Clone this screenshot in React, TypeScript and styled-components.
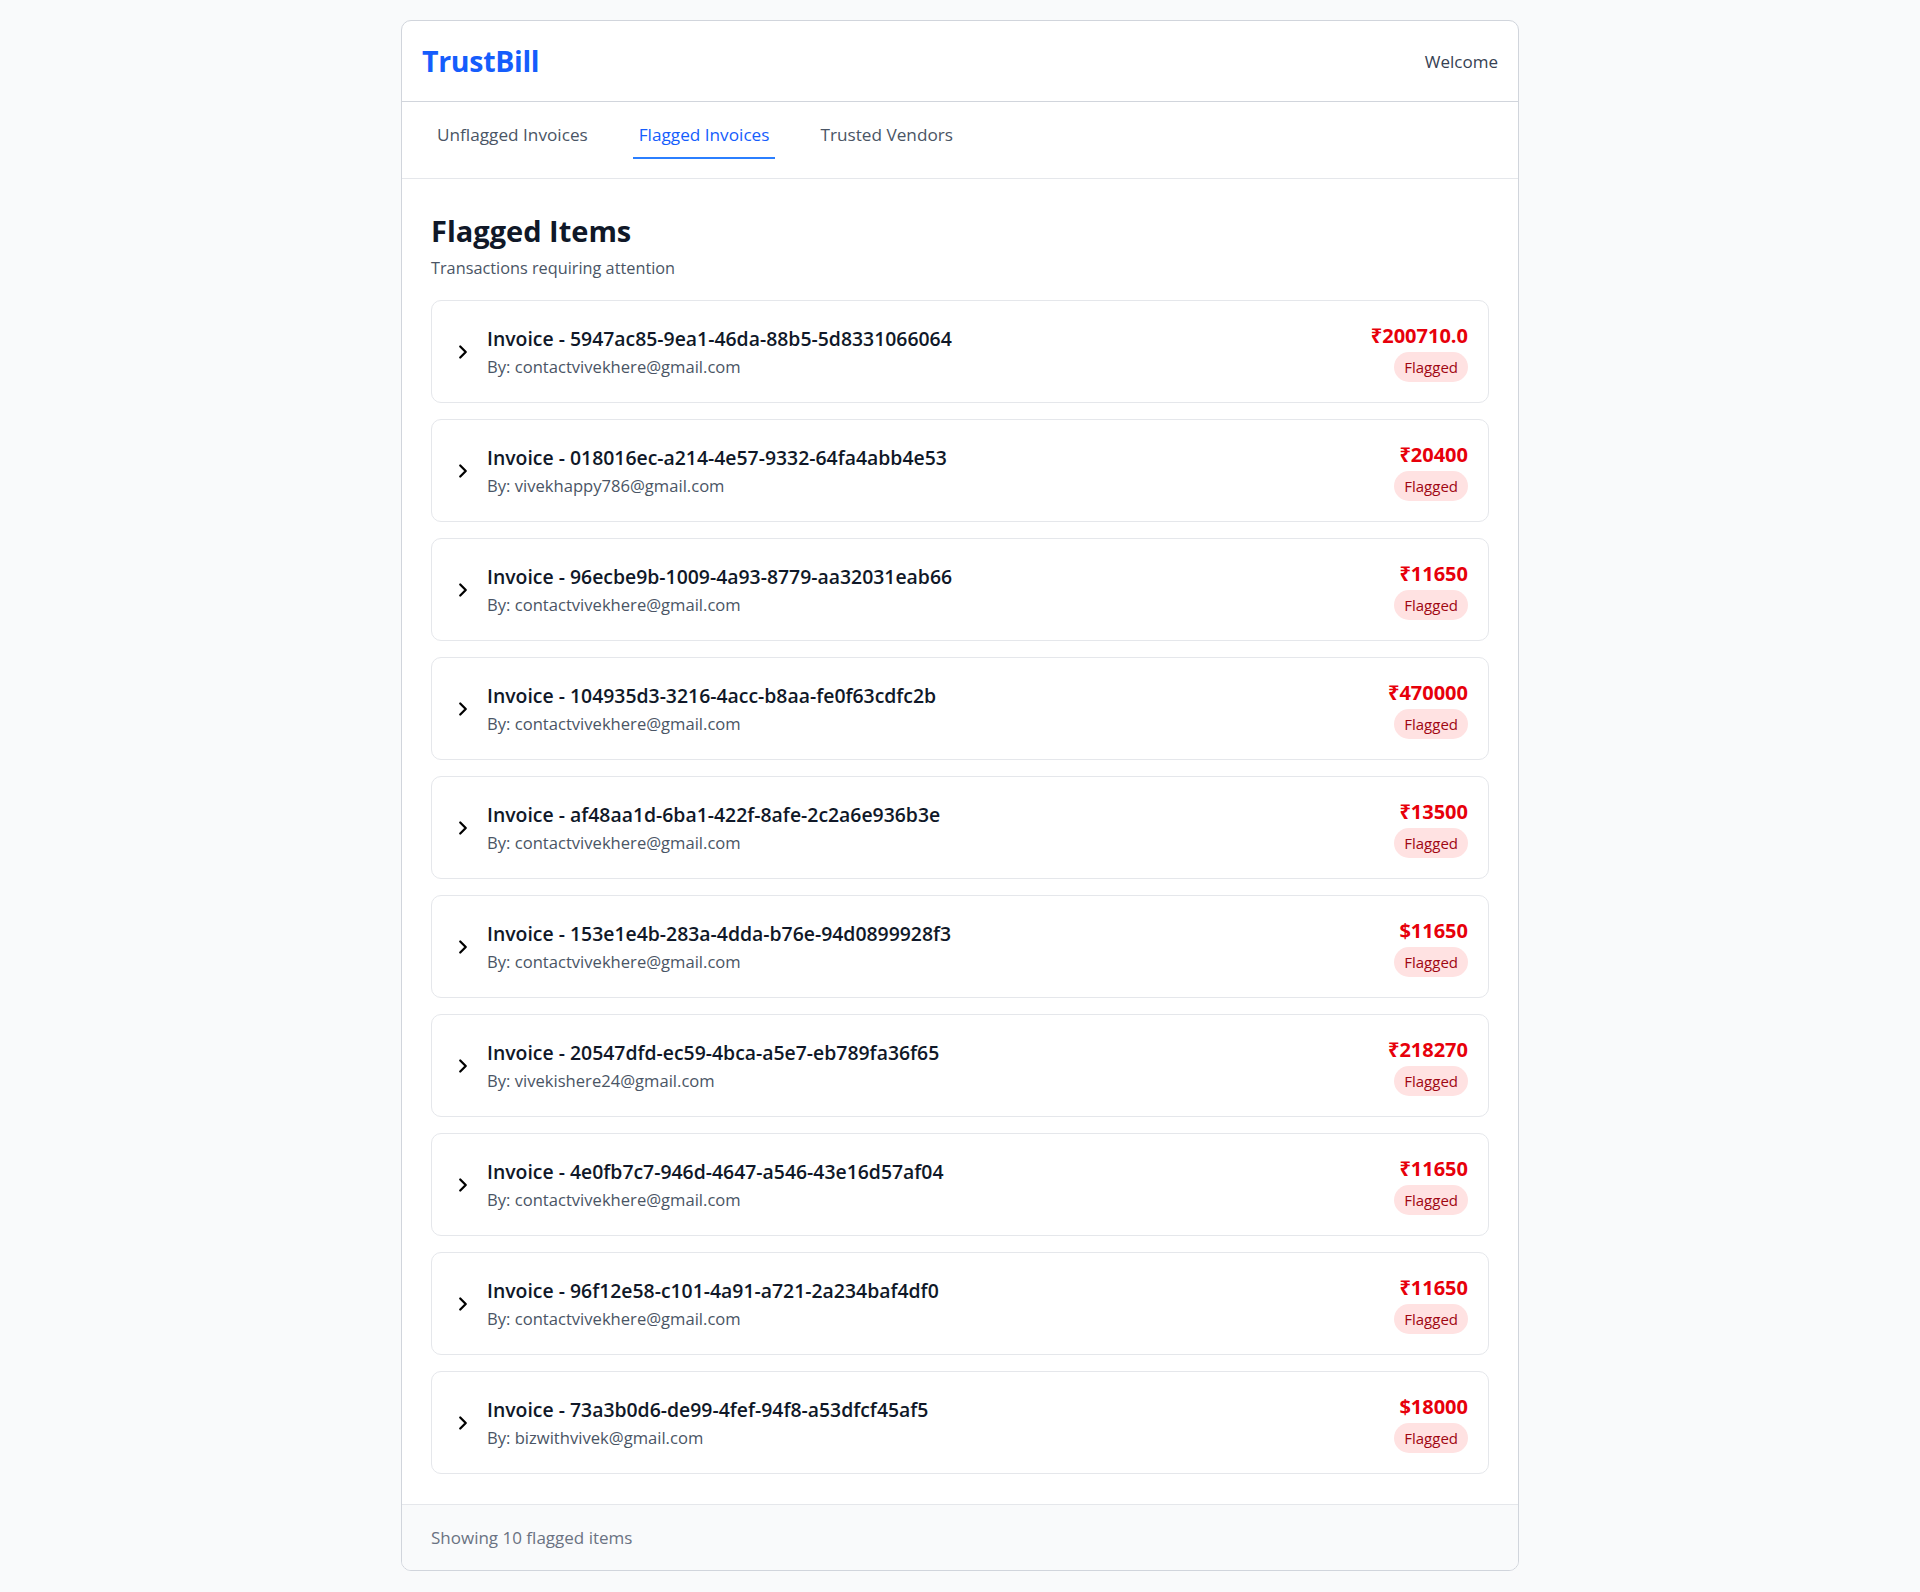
import styled, { createGlobalStyle } from "styled-components";

type Invoice = {
  id: string;
  by: string;
  amount: string;
};

const invoices: Invoice[] = [
  { id: "5947ac85-9ea1-46da-88b5-5d8331066064", by: "contactvivekhere@gmail.com", amount: "₹200710.0" },
  { id: "018016ec-a214-4e57-9332-64fa4abb4e53", by: "vivekhappy786@gmail.com", amount: "₹20400" },
  { id: "96ecbe9b-1009-4a93-8779-aa32031eab66", by: "contactvivekhere@gmail.com", amount: "₹11650" },
  { id: "104935d3-3216-4acc-b8aa-fe0f63cdfc2b", by: "contactvivekhere@gmail.com", amount: "₹470000" },
  { id: "af48aa1d-6ba1-422f-8afe-2c2a6e936b3e", by: "contactvivekhere@gmail.com", amount: "₹13500" },
  { id: "153e1e4b-283a-4dda-b76e-94d0899928f3", by: "contactvivekhere@gmail.com", amount: "$11650" },
  { id: "20547dfd-ec59-4bca-a5e7-eb789fa36f65", by: "vivekishere24@gmail.com", amount: "₹218270" },
  { id: "4e0fb7c7-946d-4647-a546-43e16d57af04", by: "contactvivekhere@gmail.com", amount: "₹11650" },
  { id: "96f12e58-c101-4a91-a721-2a234baf4df0", by: "contactvivekhere@gmail.com", amount: "₹11650" },
  { id: "73a3b0d6-de99-4fef-94f8-a53dfcf45af5", by: "bizwithvivek@gmail.com", amount: "$18000" },
];

const tabs = ["Unflagged Invoices", "Flagged Invoices", "Trusted Vendors"];

export default function App() {
  return (
    <>
      <GlobalStyle />
      <Page>
        <Panel>
          <Header>
            <Logo>TrustBill</Logo>
            <Welcome>Welcome</Welcome>
          </Header>
          <TabBar>
            {tabs.map((tab) => (
              <Tab key={tab} $active={tab === "Flagged Invoices"}>
                {tab}
              </Tab>
            ))}
          </TabBar>
          <Content>
            <Heading>Flagged Items</Heading>
            <Subtitle>Transactions requiring attention</Subtitle>
            <List>
              {invoices.map((invoice) => (
                <Row key={invoice.id}>
                  <RowMain>
                    <Chevron viewBox="0 0 24 24">
                      <path d="m9 18 6-6-6-6" />
                    </Chevron>
                    <RowText>
                      <Title>Invoice - {invoice.id}</Title>
                      <By>By: {invoice.by}</By>
                    </RowText>
                  </RowMain>
                  <RowSide>
                    <Amount>{invoice.amount}</Amount>
                    <Badge>Flagged</Badge>
                  </RowSide>
                </Row>
              ))}
            </List>
          </Content>
          <Footer>Showing 10 flagged items</Footer>
        </Panel>
      </Page>
    </>
  );
}

const GlobalStyle = createGlobalStyle`
  * {
    box-sizing: border-box;
  }
  body {
    margin: 0;
    background: #f9fafb;
    font-family: "Open Sans", "Noto Sans", sans-serif;
    color: #101828;
  }
`;

const Page = styled.div`
  padding: 20px 0 22px;
`;

const Panel = styled.div`
  width: 1118px;
  margin: 0 auto;
  background: #ffffff;
  border: 1px solid #d1d5dc;
  border-radius: 10px;
  overflow: hidden;
`;

const Header = styled.header`
  display: flex;
  align-items: center;
  justify-content: space-between;
  height: 81px;
  padding: 0 20px;
  border-bottom: 1px solid #d1d5dc;
`;

const Logo = styled.div`
  font-size: 28.5px;
  font-weight: 700;
  color: #155dfc;
  letter-spacing: -0.3px;
`;

const Welcome = styled.div`
  font-size: 17px;
  color: #364153;
`;

const TabBar = styled.nav`
  display: flex;
  gap: 39px;
  padding: 10px 29px 19px;
  border-bottom: 1px solid #e5e7eb;
`;

const Tab = styled.div<{ $active?: boolean }>`
  padding: 10px 6px;
  font-size: 17.2px;
  line-height: 25px;
  color: ${(p) => (p.$active ? "#155dfc" : "#4a5565")};
  border-bottom: 2px solid ${(p) => (p.$active ? "#2b7fff" : "transparent")};
`;

const Content = styled.main`
  padding: 32px 29px 30px;
`;

const Heading = styled.h1`
  margin: 0;
  font-size: 29px;
  line-height: 40px;
  font-weight: 700;
  color: #101828;
`;

const Subtitle = styled.p`
  margin: 5px 0 19px;
  font-size: 16.3px;
  line-height: 25px;
  color: #4a5565;
`;

const List = styled.div`
  display: flex;
  flex-direction: column;
  gap: 16px;
`;

const Row = styled.div`
  display: flex;
  align-items: center;
  justify-content: space-between;
  padding: 20px;
  border: 1px solid #e5e7eb;
  border-radius: 10px;
  background: #ffffff;
`;

const RowMain = styled.div`
  display: flex;
  align-items: center;
  gap: 13px;
`;

const Chevron = styled.svg`
  width: 22px;
  height: 22px;
  flex: none;
  fill: none;
  stroke: #000000;
  stroke-width: 2.5;
  stroke-linecap: round;
  stroke-linejoin: round;
`;

const RowText = styled.div`
  display: flex;
  flex-direction: column;
`;

const Title = styled.div`
  font-size: 19.4px;
  line-height: 30px;
  font-weight: 600;
  color: #101828;
`;

const By = styled.div`
  font-size: 16.6px;
  line-height: 25px;
  color: #4a5565;
`;

const RowSide = styled.div`
  display: flex;
  flex-direction: column;
  align-items: flex-end;
  gap: 1px;
`;

const Amount = styled.div`
  font-size: 20px;
  line-height: 30px;
  font-weight: 700;
  color: #e7000b;
`;

const Badge = styled.span`
  display: inline-block;
  padding: 5px 10px;
  border-radius: 999px;
  background: #ffe2e2;
  color: #9f0712;
  font-size: 15px;
  line-height: 20px;
`;

const Footer = styled.footer`
  padding: 20px 29px;
  background: #f9fafb;
  border-top: 1px solid #e5e7eb;
  font-size: 17px;
  line-height: 25px;
  color: #6a7282;
`;
